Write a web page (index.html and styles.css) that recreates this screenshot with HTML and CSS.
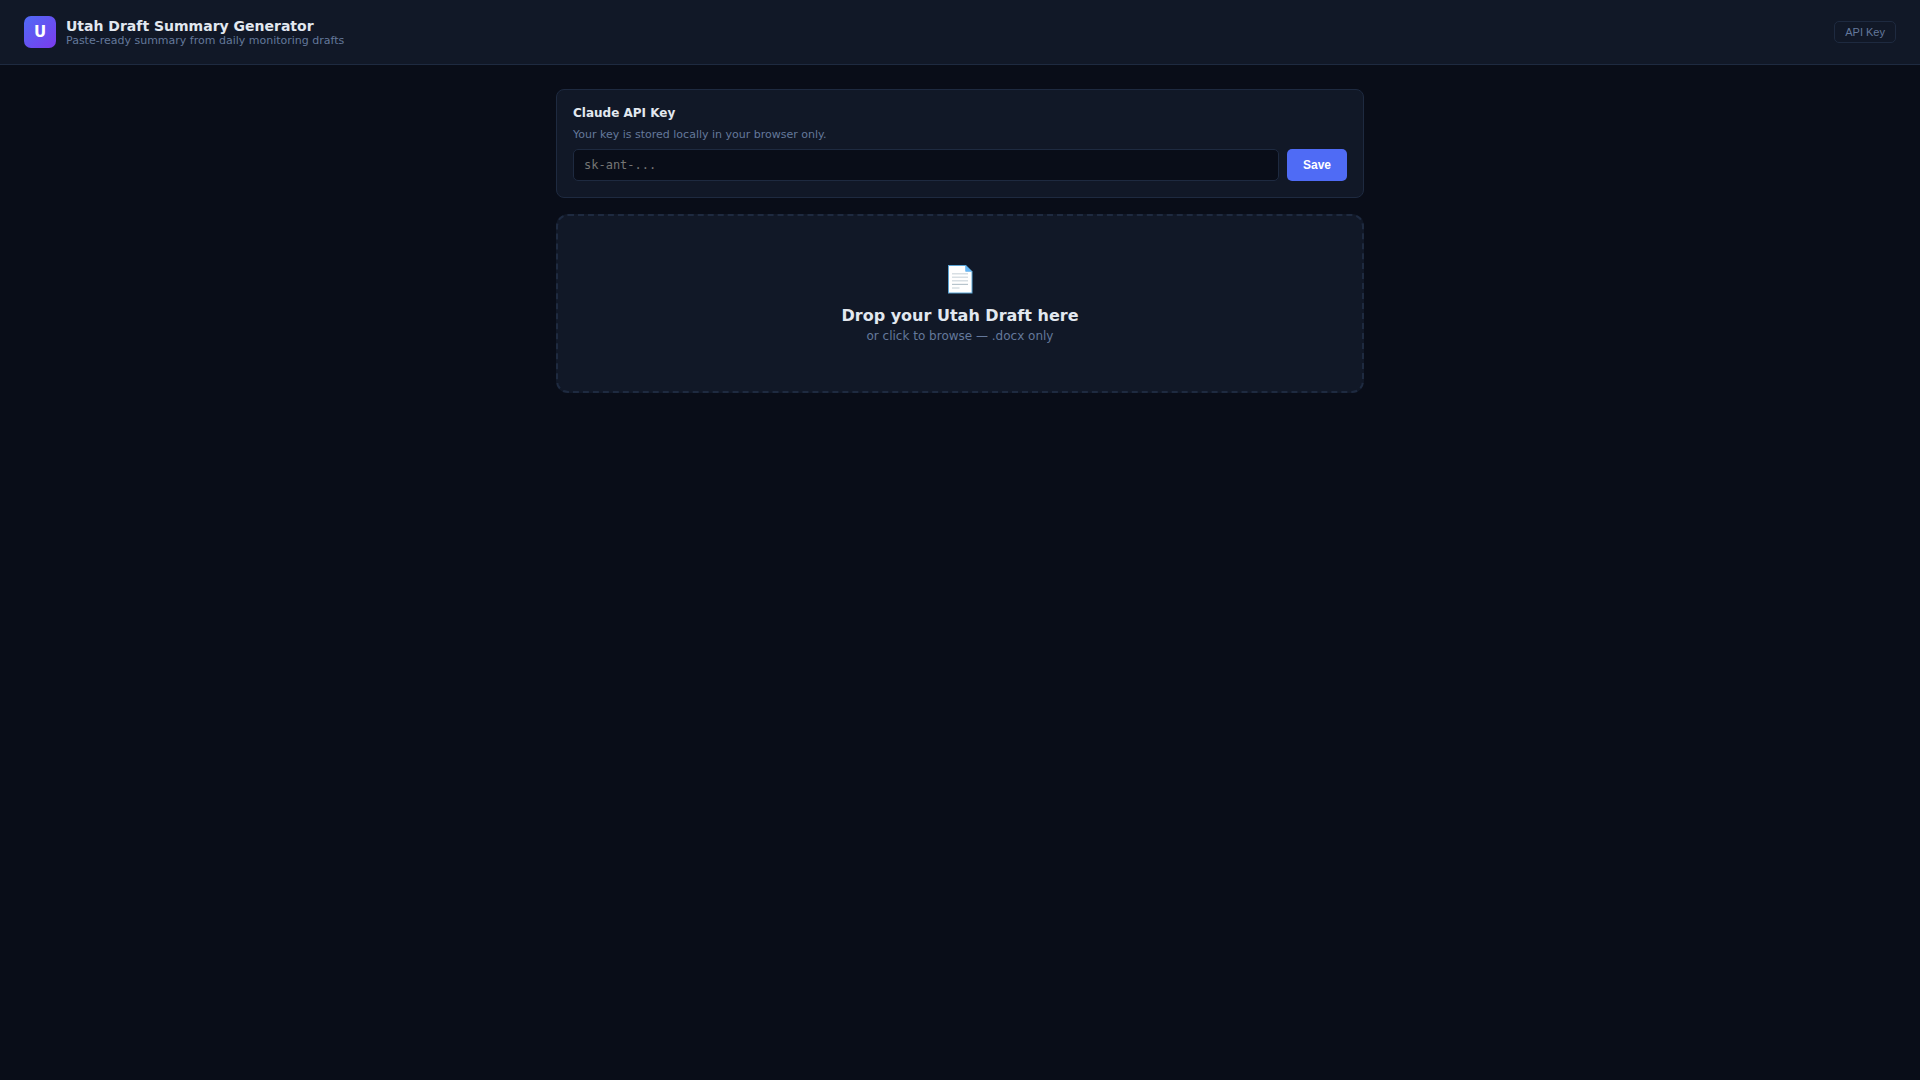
FILE: index.html
```html
<!DOCTYPE html>
<html lang="en">
<head>
    <meta charset="UTF-8">
    <meta name="viewport" content="width=device-width, initial-scale=1.0">
    <title>Utah Draft Summary Generator</title>
    <link rel="stylesheet" href="styles.css">
</head>
<body>
    <header class="header">
        <div class="brand">
            <div class="logo">U</div>
            <div>
                <h1>Utah Draft Summary Generator</h1>
                <p>Paste-ready summary from daily monitoring drafts</p>
            </div>
        </div>
        <button type="button" class="key-btn">API Key</button>
    </header>

    <main class="main">
        <section class="card">
            <label class="card-title" for="apiKey">Claude API Key</label>
            <p class="card-note">Your key is stored locally in your browser only.</p>
            <div class="key-row">
                <input type="text" id="apiKey" class="key-input" placeholder="sk-ant-...">
                <button type="button" class="save-btn">Save</button>
            </div>
        </section>

        <label class="drop-zone" for="fileInput">
            <input type="file" id="fileInput" accept=".docx" hidden>
            <svg class="drop-icon" viewBox="0 0 26 30" aria-hidden="true">
                <path d="M1 1H19L25.5 7.5V29.5H1Z" fill="#5ba4d4"/>
                <path d="M2 2H18.500V7.500H24.500V28.500H2Z" fill="#fff"/>
                <path d="M18.500 1.500V7.500H25Z" fill="#64b5f6"/>
                <path d="M5 9.800H21M5 13.200H21M5 16.700H21M5 24H12.500" stroke="#d8dfe4" stroke-width="1.500"/>
                <path d="M5 20.400H21" stroke="#b7c4cc" stroke-width="1.200"/>
            </svg>
            <span class="drop-title">Drop your Utah Draft here</span>
            <span class="drop-sub">or click to browse — .docx only</span>
        </label>
    </main>
</body>
</html>
```
FILE: styles.css
```css
:root {
    --bg: #090d18;
    --surface: #111827;
    --border: #1e2a40;
    --text: #e2e8f0;
    --muted: #64789b;
    --accent: #4f6bf5;
}
* {
    box-sizing: border-box;
    margin: 0;
    padding: 0;
}
body {
    font-family: "DejaVu Sans", sans-serif;
    background: var(--bg);
    color: var(--text);
    min-height: 100vh;
}
button {
    font-family: "Liberation Sans", Arial, sans-serif;
    cursor: pointer;
}

/* header */
.header {
    display: flex;
    align-items: center;
    justify-content: space-between;
    padding: 16px 24px;
    background: var(--surface);
    border-bottom: 1px solid var(--border);
}
.brand {
    display: flex;
    align-items: center;
    gap: 10px;
}
.logo {
    display: flex;
    align-items: center;
    justify-content: center;
    width: 32px;
    height: 32px;
    border-radius: 7px;
    background: linear-gradient(135deg, var(--accent), #7c3aed);
    color: #fff;
    font-size: 15px;
    font-weight: 700;
}
.header h1 {
    font-size: 14px;
    font-weight: 700;
}
.header p {
    font-size: 11px;
    color: var(--muted);
}
.key-btn {
    padding: 4px 10px;
    border: 1px solid var(--border);
    border-radius: 5px;
    background: none;
    color: var(--muted);
    font-size: 11px;
}

/* content */
.main {
    display: flex;
    flex-direction: column;
    gap: 16px;
    max-width: 840px;
    margin: 0 auto;
    padding: 24px 16px;
}
.card {
    padding: 16px;
    background: var(--surface);
    border: 1px solid var(--border);
    border-radius: 8px;
}
.card-title {
    display: block;
    margin-bottom: 8px;
    font-size: 12px;
    font-weight: 700;
}
.card-note {
    margin-bottom: 8px;
    font-size: 11px;
    color: var(--muted);
}
.key-row {
    display: flex;
    gap: 8px;
}
.key-input {
    flex: 1;
    height: 32px;
    padding: 0 10px;
    border: 1px solid var(--border);
    border-radius: 5px;
    background: var(--bg);
    color: var(--text);
    font-family: "DejaVu Sans Mono", monospace;
    font-size: 12px;
}
.save-btn {
    padding: 0 16px;
    border: none;
    border-radius: 5px;
    background: var(--accent);
    color: #fff;
    font-size: 12px;
    font-weight: 700;
}

/* drop zone */
.drop-zone {
    display: flex;
    flex-direction: column;
    align-items: center;
    padding: 48px 24px;
    background: var(--surface);
    border: 2px dashed var(--border);
    border-radius: 12px;
    cursor: pointer;
}
.drop-icon {
    width: 26px;
    height: 30px;
    margin-bottom: 12px;
}
.drop-title {
    margin-bottom: 4px;
    font-size: 16px;
    font-weight: 700;
}
.drop-sub {
    font-size: 12px;
    color: var(--muted);
}
```
